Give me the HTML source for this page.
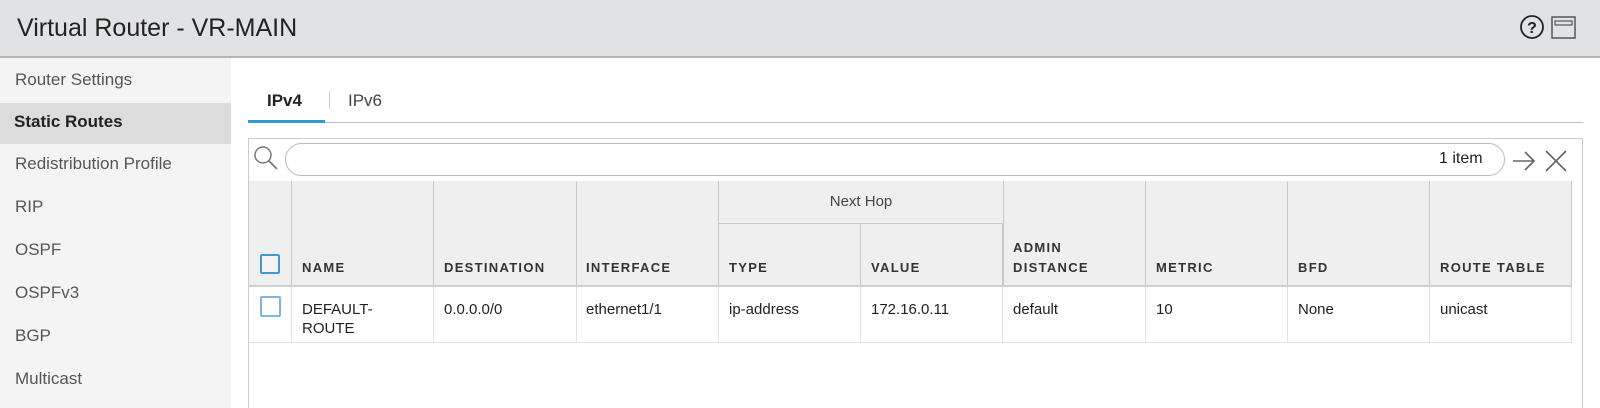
<!DOCTYPE html>
<html><head><style>
*{margin:0;padding:0;box-sizing:border-box}
body{width:1600px;height:408px;overflow:hidden;background:#fff;font-family:"Liberation Sans",sans-serif;color:#222;position:relative}
.hdr{position:absolute;left:0;top:0;width:1600px;height:58px;background:#e1e2e4;border-bottom:2px solid #b5b5b5}
.hdr .t{position:absolute;left:17px;top:14px;font-size:25px;color:#222}
.side{position:absolute;left:0;top:58px;width:231px;height:350px;background:#f4f4f4}
.side div{position:absolute;left:15px;font-size:17px;color:#555}
.sel{position:absolute;left:0;top:103px;width:231px;height:41px;background:#dcdcdc}
.abs{position:absolute}
.hc{position:absolute;top:181px;height:106px;background:#efefef;border-right:1px solid #c8c8c8;border-bottom:2px solid #cfcfcf}
.hl{position:absolute;font-size:13px;font-weight:bold;letter-spacing:1.3px;color:#333;line-height:20px}
.dc{position:absolute;top:287px;height:56px;border-right:1px solid #e2e2e2;border-bottom:1px solid #e2e2e2}
.dt{position:absolute;top:300px;font-size:15px;color:#222;line-height:19px}
</style></head><body>
<div class="hdr"><div class="t">Virtual Router - VR-MAIN</div>
<svg class="abs" style="left:1518px;top:15px" width="60" height="26" viewBox="0 0 60 26">
<circle cx="14" cy="12" r="11" fill="none" stroke="#222" stroke-width="1.8"/>
<text x="14" y="18" font-size="16" font-weight="bold" text-anchor="middle" font-family="Liberation Sans" fill="#222">?</text>
<rect x="34" y="2" width="23" height="21" fill="none" stroke="#555" stroke-width="1.5"/>
<rect x="37" y="6" width="17" height="4" fill="none" stroke="#555" stroke-width="1.2"/>
</svg></div>
<div class="side">
<div class="sel" style="top:45px;left:0;width:231px"></div>
<div style="top:12px">Router Settings</div>
<div style="top:54px;color:#222;font-weight:bold;left:14px">Static Routes</div>
<div style="top:96px">Redistribution Profile</div>
<div style="top:139px">RIP</div>
<div style="top:182px">OSPF</div>
<div style="top:225px">OSPFv3</div>
<div style="top:268px">BGP</div>
<div style="top:311px">Multicast</div>
</div>
<div class="abs" style="left:267px;top:91px;font-size:17px;font-weight:bold">IPv4</div>
<div class="abs" style="left:329px;top:91px;width:1px;height:18px;background:#ccc"></div>
<div class="abs" style="left:348px;top:91px;font-size:17px;color:#444">IPv6</div>
<div class="abs" style="left:248px;top:122px;width:1335px;height:1px;background:#bbb"></div>
<div class="abs" style="left:248px;top:120px;width:77px;height:3px;background:#2e9ad8"></div>
<div class="abs" style="left:248px;top:138px;width:1335px;height:270px;border:1px solid #ccc;border-bottom:none"></div>
<svg class="abs" style="left:252px;top:144px" width="30" height="30"><circle cx="11" cy="11" r="8" fill="none" stroke="#777" stroke-width="1.5"/><line x1="17" y1="17" x2="25" y2="25" stroke="#777" stroke-width="1.8"/></svg>
<div class="abs" style="left:285px;top:143px;width:1220px;height:33px;border:1px solid #bbb;border-radius:17px"></div>
<div class="abs" style="left:1439px;top:150px;font-size:16px">1 item</div>
<svg class="abs" style="left:1510px;top:148px" width="70" height="26"><path d="M3 13H24M15 4l9 9-9 9" fill="none" stroke="#666" stroke-width="1.6"/><path d="M36 3l20 20M56 3L36 23" stroke="#666" stroke-width="1.6"/></svg>
<div class="hc" style="left:249px;width:43px"></div>
<div class="hc" style="left:292px;width:142px"></div>
<div class="hc" style="left:434px;width:143px"></div>
<div class="hc" style="left:577px;width:142px"></div>
<div class="hc" style="left:719px;width:284px;height:43px;border-bottom:1px solid #c8c8c8;border-right:none"></div>
<div class="hc" style="left:719px;top:224px;height:63px;width:142px"></div>
<div class="hc" style="left:861px;top:224px;height:63px;width:142px"></div>
<div class="hc" style="left:1003px;width:143px;border-left:1px solid #c8c8c8"></div>
<div class="hc" style="left:1146px;width:142px"></div>
<div class="hc" style="left:1288px;width:142px"></div>
<div class="hc" style="left:1430px;width:142px"></div>
<div class="abs" style="left:719px;top:193px;width:284px;text-align:center;font-size:15px;color:#444">Next Hop</div>
<div class="abs" style="left:260px;top:254px;width:20px;height:20px;border:2px solid #3d9ad6;border-radius:2px;background:#f4f4f4"></div>
<div class="hl" style="left:302px;top:258px">NAME</div>
<div class="hl" style="left:444px;top:258px">DESTINATION</div>
<div class="hl" style="left:586px;top:258px">INTERFACE</div>
<div class="hl" style="left:729px;top:258px">TYPE</div>
<div class="hl" style="left:871px;top:258px">VALUE</div>
<div class="hl" style="left:1013px;top:238px">ADMIN<br>DISTANCE</div>
<div class="hl" style="left:1156px;top:258px">METRIC</div>
<div class="hl" style="left:1298px;top:258px">BFD</div>
<div class="hl" style="left:1440px;top:258px">ROUTE TABLE</div>
<div class="dc" style="left:249px;width:43px"></div>
<div class="dc" style="left:292px;width:142px"></div>
<div class="dc" style="left:434px;width:143px"></div>
<div class="dc" style="left:577px;width:142px"></div>
<div class="dc" style="left:719px;width:142px"></div>
<div class="dc" style="left:861px;width:142px"></div>
<div class="dc" style="left:1003px;width:143px"></div>
<div class="dc" style="left:1146px;width:142px"></div>
<div class="dc" style="left:1288px;width:142px"></div>
<div class="dc" style="left:1430px;width:142px"></div>
<div class="abs" style="left:260px;top:296px;width:21px;height:21px;border:2px solid #7fb6dd;border-radius:2px"></div>
<div class="dt" style="left:302px">DEFAULT-<br>ROUTE</div>
<div class="dt" style="left:444px">0.0.0.0/0</div>
<div class="dt" style="left:586px">ethernet1/1</div>
<div class="dt" style="left:729px">ip-address</div>
<div class="dt" style="left:871px">172.16.0.11</div>
<div class="dt" style="left:1013px">default</div>
<div class="dt" style="left:1156px">10</div>
<div class="dt" style="left:1298px">None</div>
<div class="dt" style="left:1440px">unicast</div>
</body></html>
